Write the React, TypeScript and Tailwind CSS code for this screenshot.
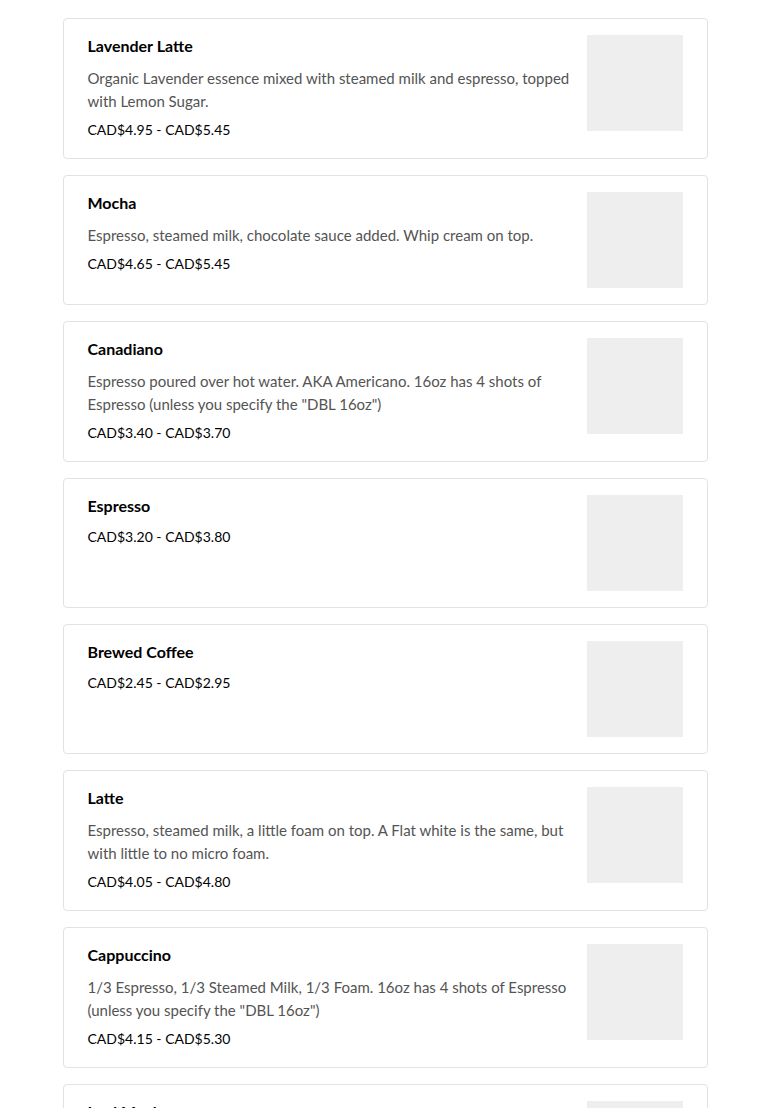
type MenuItem = {
  name: string;
  description?: string;
  price: string;
};

const items: MenuItem[] = [
  {
    name: "Lavender Latte",
    description: "Organic Lavender essence mixed with steamed milk and espresso, topped with Lemon Sugar.",
    price: "CAD$4.95 - CAD$5.45",
  },
  {
    name: "Mocha",
    description: "Espresso, steamed milk, chocolate sauce added. Whip cream on top.",
    price: "CAD$4.65 - CAD$5.45",
  },
  {
    name: "Canadiano",
    description: 'Espresso poured over hot water. AKA Americano. 16oz has 4 shots of Espresso (unless you specify the "DBL 16oz")',
    price: "CAD$3.40 - CAD$3.70",
  },
  { name: "Espresso", price: "CAD$3.20 - CAD$3.80" },
  { name: "Brewed Coffee", price: "CAD$2.45 - CAD$2.95" },
  {
    name: "Latte",
    description: "Espresso, steamed milk, a little foam on top. A Flat white is the same, but with little to no micro foam.",
    price: "CAD$4.05 - CAD$4.80",
  },
  {
    name: "Cappuccino",
    description: '1/3 Espresso, 1/3 Steamed Milk, 1/3 Foam. 16oz has 4 shots of Espresso (unless you specify the "DBL 16oz")',
    price: "CAD$4.15 - CAD$5.30",
  },
  {
    name: "Iced Mocha",
    description: "Espresso, cold milk, chocolate sauce over ice.",
    price: "CAD$4.95 - CAD$5.75",
  },
];

function MenuCard({ item }: { item: MenuItem }) {
  return (
    <div className="flex gap-4 rounded border border-[#e2e2e2] bg-white px-6 py-4">
      <div className="min-w-0 flex-1 pb-[2px]">
        <h3 className="mb-[10px] text-base font-bold leading-[22px] text-black">{item.name}</h3>
        {item.description && (
          <p className="mb-[7px] text-[15px] leading-[23px] text-[#545454]">{item.description}</p>
        )}
        <p className="text-sm leading-5 text-black">{item.price}</p>
      </div>
      <div className="h-24 w-24 shrink-0 bg-[#eeeeee]" />
    </div>
  );
}

export default function App() {
  return (
    <main className="min-h-screen bg-white" style={{ fontFamily: "Lato, 'Liberation Sans', sans-serif" }}>
      <div className="mx-auto flex w-[645px] flex-col gap-4 pt-[18px]">
        {items.map((item) => (
          <MenuCard key={item.name} item={item} />
        ))}
      </div>
    </main>
  );
}
